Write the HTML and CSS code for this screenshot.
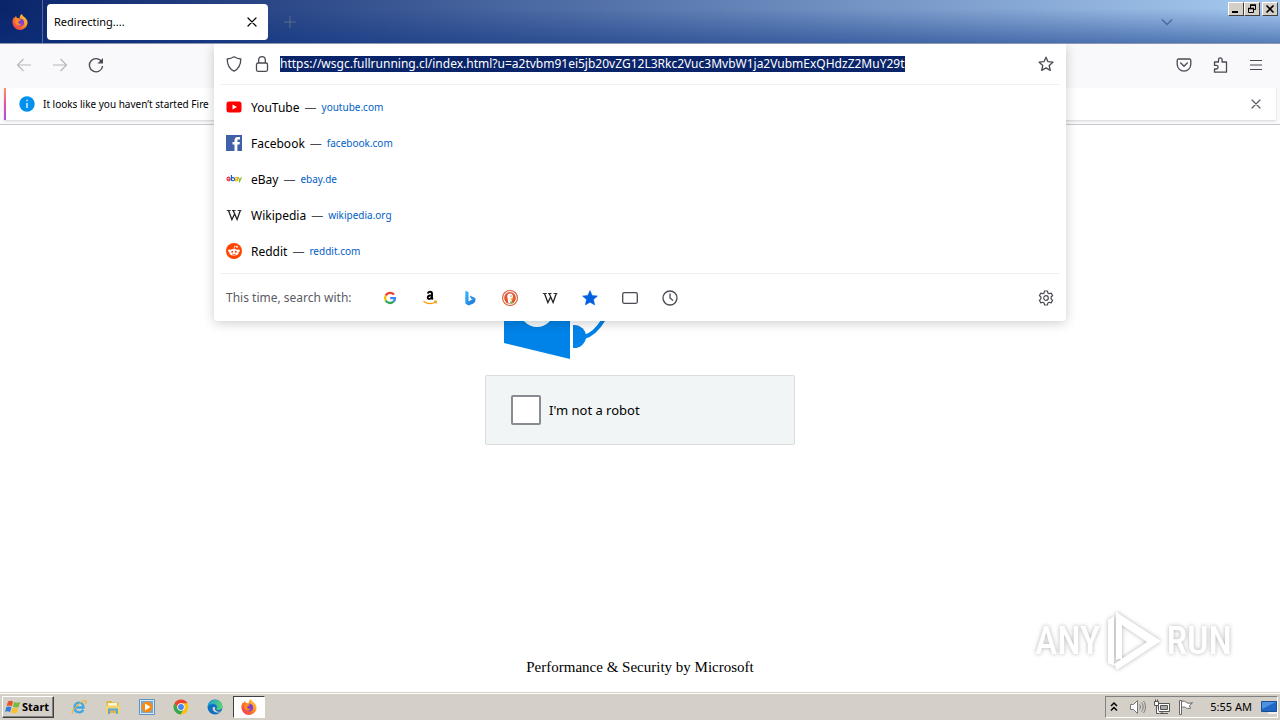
FILE: index.html
```
<!DOCTYPE html>
<html lang="en">
<head>
    <meta charset="UTF-8">
    <meta name="viewport" content="width=device-width, initial-scale=1.0">
    <title>Redirecting....</title>
    <link rel="stylesheet" href="styles.css">
</head>
<body>
    <!-- shared shapes -->
    <svg class="defs" aria-hidden="true">
        <defs>
            <linearGradient id="fox-fire" x1="1" y1="0" x2="0" y2="1">
                <stop offset="0" stop-color="#ffe14a"/>
                <stop offset=".45" stop-color="#ff8a1f"/>
                <stop offset="1" stop-color="#f5205f"/>
            </linearGradient>
            <linearGradient id="bing-blue" x1="0" y1="0" x2="1" y2="1">
                <stop offset="0" stop-color="#37bdff"/>
                <stop offset="1" stop-color="#1b6ed6"/>
            </linearGradient>
            <linearGradient id="edge-top" x1="0" y1="0" x2="1" y2="0">
                <stop offset="0" stop-color="#1b9de2"/>
                <stop offset="1" stop-color="#5fd668"/>
            </linearGradient>
        </defs>
        <symbol id="firefox" viewBox="0 0 16 16">
            <path fill="url(#fox-fire)" d="M10 0c.2 1.500 1.300 2.200 2.300 3.200.7-.2 1 .6 1.200 1 1.700 1.600 2.200 3.300 2 5.200A7.600 7.600 0 0 1 8 16 7.700 7.700 0 0 1 .4 8.300C.4 6.300 1 4.400 2 3.200c.1.500.3.800.5 1 .4-1 1-1.800 1.600-2.200 0 .8.300 1.500 1 2 1-.2 1.800 0 2.600.5C7.400 2.700 8.300 1 10 0z"/>
            <circle cx="8.200" cy="8.600" r="3.800" fill="#7a3be0"/>
            <path fill="#ff8a1f" d="M3 6c1.500-1.200 3-1.300 4.300-.7 1 0 1.500.2 1.700.6-1 .4-1.500 1-2 1.500-1 .4-1 1.200-.4 1.800.8.800 2 .7 3.200.2-.6 1.700-2 2.400-3.800 2C3.700 11 2.600 8.500 3 6z"/>
        </symbol>
        <symbol id="close" viewBox="0 0 16 16">
            <path d="M4 4l8 8M12 4l-8 8" fill="none" stroke="currentColor" stroke-width="1.200" stroke-linecap="round"/>
        </symbol>
        <symbol id="wikipedia" viewBox="0 0 16 16">
            <path d="M.8 3.500h4M6 3.500h3.600M11.600 3.500h3.800" stroke="#222" stroke-width=".9"/>
            <path d="M2.500 3.500l3.400 9 2.700-5.500M7.200 3.500l3.900 9 3.200-9" fill="none" stroke="#222" stroke-width="1.300"/>
        </symbol>
    </svg>

    <header class="titlebar">
        <div class="view-button"><svg class="icon"><use href="#firefox"/></svg></div>
        <div class="tab">
            <span>Redirecting....</span>
            <button class="plain" aria-label="Close tab"><svg class="icon"><use href="#close"/></svg></button>
        </div>
        <button class="plain new-tab" aria-label="New tab">
            <svg class="icon" viewBox="0 0 16 16"><path d="M8 2v12M2 8h12" stroke="currentColor"/></svg>
        </button>
        <button class="plain list-tabs" aria-label="List all tabs">
            <svg class="icon" viewBox="0 0 16 16"><path d="M3 5.500l5 5 5-5" fill="none" stroke="currentColor" stroke-width="1.400"/></svg>
        </button>
        <div class="window-buttons">
            <button aria-label="Minimize"><svg viewBox="0 0 12 10"><path d="M2 8h6" stroke="#000" stroke-width="2"/></svg></button>
            <button aria-label="Restore"><svg viewBox="0 0 12 10"><path d="M4.500 4V1.500h5v4H8" fill="none" stroke="#000"/><path d="M4 1h6M2 4.500h6" stroke="#000" stroke-width="1.500"/><path d="M2.500 4.500h5v4h-5z" fill="none" stroke="#000"/></svg></button>
            <button class="shut" aria-label="Close"><svg viewBox="0 0 12 10"><path d="M2.500 1.500l7 7M9.500 1.500l-7 7" stroke="#000" stroke-width="1.700"/></svg></button>
        </div>
    </header>

    <nav class="toolbar">
        <div class="nav-buttons">
            <button class="plain" aria-label="Back" disabled><svg class="icon" viewBox="0 0 16 16"><path d="M15 8H1.500M7.500 2L1.500 8l6 6" fill="none" stroke="currentColor" stroke-width="1.200"/></svg></button>
            <button class="plain" aria-label="Forward" disabled><svg class="icon" viewBox="0 0 16 16"><path d="M1 8h13.500M8.500 2l6 6-6 6" fill="none" stroke="currentColor" stroke-width="1.200"/></svg></button>
            <button class="plain" aria-label="Reload"><svg class="icon" viewBox="0 0 16 16"><path d="M13.800 5A6.600 6.600 0 1 0 14.600 9" fill="none" stroke="currentColor" stroke-width="1.400"/><path d="M15 1v5.500H9.500z" fill="currentColor"/></svg></button>
        </div>

        <div class="urlbar">
            <div class="urlbar-view">
                <form class="url-row">
                    <svg class="icon" viewBox="0 0 16 16"><path d="M8 .8c2 1.300 4.300 2 6.800 2.200 0 5.500-2 9.800-6.800 12.200C3.200 12.800 1.200 8.500 1.200 3 3.700 2.800 6 2.100 8 .8z" fill="none" stroke="currentColor" stroke-width="1.300" stroke-linejoin="round"/></svg>
                    <svg class="icon" viewBox="0 0 16 16"><rect x="2.500" y="7" width="11" height="8.300" rx="1.500" fill="none" stroke="currentColor" stroke-width="1.300"/><path d="M4.700 7V4a3.300 3.300 0 0 1 6.600 0v3" fill="none" stroke="currentColor" stroke-width="1.300"/></svg>
                    <input class="url" id="url" type="text" aria-label="Address" autofocus spellcheck="false" value="https://wsgc.fullrunning.cl/index.html?u=a2tvbm91ei5jb20vZG12L3Rkc2Vuc3MvbW1ja2VubmExQHdzZ2MuY29t">
                    <button type="button" class="plain" aria-label="Bookmark this page"><svg class="icon" viewBox="0 0 16 16"><path d="M8 1.200l2 4.500 4.900.5-3.700 3.300 1.100 4.900L8 11.900l-4.300 2.500 1.100-4.900L1.100 6.200l4.900-.5z" fill="none" stroke="currentColor" stroke-width="1.300" stroke-linejoin="round"/></svg></button>
                </form>
                <ul class="results">
                    <li>
                        <svg class="icon" viewBox="0 0 16 16"><rect x=".5" y="2.500" width="15" height="11" rx="2.500" fill="#f00"/><path d="M6.500 5.500v5L11 8z" fill="#fff"/></svg>
                        <span class="name">YouTube</span><span class="dash">—</span><a href="#">youtube.com</a>
                    </li>
                    <li>
                        <svg class="icon" viewBox="0 0 16 16"><path d="M0 0h16v16H0z" fill="#4060a8"/><path d="M8.500 16V9.500h-2V7h2V5.300C8.500 3.200 9.800 2 11.800 2H14v2.500h-1.300c-1 0-1.300.4-1.300 1.100V7h2.500l-.4 2.500h-2.100V16z" fill="#fff"/></svg>
                        <span class="name">Facebook</span><span class="dash">—</span><a href="#">facebook.com</a>
                    </li>
                    <li>
                        <svg class="icon" viewBox="0 0 16 16" fill="none" stroke-width="1.100"><path d="M1 8.200h3.200C4.200 5.500 1 5.500 1 8c0 2.300 2.500 2.200 3.100 1.100" stroke="#e53238"/><path d="M5.400 4v5.800" stroke="#0064d2"/><circle cx="7" cy="8.200" r="1.600" stroke="#0064d2"/><path d="M9.200 6.800c1-.8 2.400-.5 2.400.6v2.400M11.600 8c-3.200-.1-2.800 2-1.500 1.800.9 0 1.500-.6 1.500-1.400" stroke="#f5af02"/><path d="M12.300 6.300l1.500 3.300M15.500 6.300l-2.400 5.200" stroke="#86b817"/></svg>
                        <span class="name">eBay</span><span class="dash">—</span><a href="#">ebay.de</a>
                    </li>
                    <li>
                        <svg class="icon"><use href="#wikipedia"/></svg>
                        <span class="name">Wikipedia</span><span class="dash">—</span><a href="#">wikipedia.org</a>
                    </li>
                    <li>
                        <svg class="icon" viewBox="0 0 16 16"><circle cx="8" cy="8" r="8" fill="#ff4500"/><ellipse cx="8" cy="9.300" rx="4.700" ry="3.300" fill="#fff"/><circle cx="3.400" cy="7.800" r="1.300" fill="#fff"/><circle cx="12.600" cy="7.800" r="1.300" fill="#fff"/><circle cx="11" cy="3.700" r="1" fill="#fff"/><path d="M8 6l.7-3 2.300.6" fill="none" stroke="#fff" stroke-width=".7"/><circle cx="6.200" cy="8.700" r="1" fill="#ff4500"/><circle cx="9.800" cy="8.700" r="1" fill="#ff4500"/><path d="M6 10.900c1.200.8 2.800.8 4 0" fill="none" stroke="#ff4500" stroke-width=".7"/></svg>
                        <span class="name">Reddit</span><span class="dash">—</span><a href="#">reddit.com</a>
                    </li>
                </ul>
                <div class="one-offs">
                    <span class="one-offs-label">This time, search with:</span>
                    <button class="plain" aria-label="Google"><svg class="icon" viewBox="0 0 16 16" fill="none" stroke-width="2.300"><path d="M12 4.600A5 5 0 0 0 3.700 5.600" stroke="#ea4335"/><path d="M3.700 5.600a5 5 0 0 0 0 4.900" stroke="#fbbc05"/><path d="M3.700 10.500a5 5 0 0 0 7.700 1.200" stroke="#34a853"/><path d="M11.400 11.700A5 5 0 0 0 13 8.200H8.200" stroke="#4285f4"/></svg></button>
                    <button class="plain" aria-label="Amazon"><svg class="icon" viewBox="0 0 16 16" fill="none"><path d="M5.700 3.600C6.300 1.200 10 1.200 10 3.600v4c0 .8.300 1.300.8 1.800M10 5.200C7 5.200 5.700 6 5.700 7.700c0 2 3.700 1.600 4.300-1" stroke="#000" stroke-width="1.900"/><path d="M1.500 11.200c4 2.900 8.500 2.900 12 .8M12 11l2.400.2-.6 2.300" stroke="#f90" stroke-width="1.200"/></svg></button>
                    <button class="plain" aria-label="Bing"><svg class="icon" viewBox="0 0 16 16"><path d="M3.300.8l3.200 1.200v9.300l6.800-3.400c.6 2.200-.2 4.300-2 5.500l-4.700 2.100-3.300-2z" fill="url(#bing-blue)"/><path d="M7.600 5.500l1.500 3.200 2 1 2.200-1.700z" fill="#2a8be8"/></svg></button>
                    <button class="plain" aria-label="DuckDuckGo"><svg class="icon" viewBox="0 0 16 16"><circle cx="8" cy="8" r="8" fill="#de5833"/><circle cx="8" cy="8" r="6.900" fill="#fff"/><circle cx="8" cy="8" r="5.900" fill="#de5833"/><path d="M6.500 13.300L5.300 7C5 4.500 6.300 3.500 8 3.500c2 0 3 1.500 3 3.500l-1.300 2 .3 4.500z" fill="#fff"/><path d="M8.500 8.300l3.200-.4-.8 1.400-2.400.4z" fill="#fdb913"/><path d="M8.500 11l3 1-1.500 1.700-1.800-.7z" fill="#65b845"/><circle cx="9" cy="6" r=".6" fill="#334"/></svg></button>
                    <button class="plain" aria-label="Wikipedia"><svg class="icon"><use href="#wikipedia"/></svg></button>
                    <button class="plain" aria-label="Bookmarks"><svg class="icon" viewBox="0 0 16 16"><path d="M8 .5l2.200 4.900 5.300.6-4 3.600 1.200 5.400L8 12.300 3.300 15l1.200-5.400L.5 6l5.300-.6z" fill="#0060df" stroke="#0060df" stroke-width=".5" stroke-linejoin="round"/></svg></button>
                    <button class="plain" aria-label="Tabs"><svg class="icon" viewBox="0 0 16 16"><rect x=".7" y="2.700" width="14.600" height="10.600" rx="1.500" fill="none" stroke="currentColor" stroke-width="1.300"/></svg></button>
                    <button class="plain" aria-label="History"><svg class="icon" viewBox="0 0 16 16" fill="none" stroke="currentColor" stroke-width="1.300"><circle cx="8" cy="8" r="7"/><path d="M8 3.500V8l3 2.500"/></svg></button>
                    <button class="plain settings" aria-label="Search settings"><svg class="icon" viewBox="0 0 16 16" fill="none" stroke="currentColor" stroke-width="1.200" stroke-linejoin="round"><path d="M6.600 1h2.800l.5 2 1.200.7 2-.6 1.500 2.400-1.500 1.500v1.900l1.500 1.500-1.500 2.500-2-.6-1.200.7-.5 2H6.600l-.5-2-1.200-.7-2 .6-1.500-2.500 1.500-1.500V7L1.400 5.500l1.500-2.400 2 .6L6.100 3z"/><circle cx="8" cy="8" r="2.300"/></svg></button>
                </div>
            </div>
        </div>

        <div class="tool-buttons">
            <button class="plain" aria-label="Save to Pocket"><svg class="icon" viewBox="0 0 16 16" fill="none" stroke="currentColor" stroke-width="1.300" stroke-linejoin="round"><path d="M2.500 2h11a1.300 1.300 0 0 1 1.300 1.300v4a6.800 6.800 0 0 1-13.600 0v-4A1.300 1.300 0 0 1 2.500 2z"/><path d="M4.700 6L8 9.200 11.300 6" stroke-linecap="round"/></svg></button>
            <button class="plain" aria-label="Extensions"><svg class="icon" viewBox="0 0 16 16" fill="none" stroke="currentColor" stroke-width="1.300" stroke-linejoin="round"><path d="M2.500 5h4V2.700a1.700 1.700 0 0 1 3.600 0V5h4.400v10.200H2.500V12h1.800a1.800 1.800 0 0 0 0-3.600H2.500z"/></svg></button>
            <button class="plain" aria-label="Menu"><svg class="icon" viewBox="0 0 16 16"><path d="M2 3.500h12M2 8h12M2 12.500h12" stroke="currentColor" stroke-width="1.200"/></svg></button>
        </div>
    </nav>

    <div class="notification">
        <div class="message">
            <svg class="icon" viewBox="0 0 16 16"><circle cx="8" cy="8" r="7.700" fill="#0090ed"/><path d="M8 7v5M8 3.700v1.600" stroke="#fff" stroke-width="1.300"/></svg>
            <span class="message-text">It looks like you haven’t started Fire</span>
            <button class="plain" aria-label="Dismiss"><svg class="icon"><use href="#close"/></svg></button>
        </div>
    </div>

    <main class="content">
        <!-- lower part of the mark, the rest is under the address panel -->
        <svg class="mark" viewBox="0 0 272 160">
            <path d="M0 0h66v160L0 144z" fill="#0083e8"/>
            <ellipse cx="33" cy="108" rx="18" ry="20" fill="#f4fbfc"/>
            <path d="M69 126h1a12 11.500 0 0 1 0 23h-1z" fill="#0083e8"/>
            <path d="M80 138c8-2 14-8 20-18" fill="none" stroke="#0083e8" stroke-width="4"/>
        </svg>
        <label class="captcha">
            <input type="checkbox">
            <span>I'm not a robot</span>
        </label>
        <p class="footer-text">Performance &amp; Security by Microsoft</p>
        <div class="watermark">
            <span>ANY</span>
            <svg viewBox="0 0 60 66">
                <path d="M5 12v43l6 3V8zM13 4l45 29-44 29-3-6 33-22-25-17v32l-6 3z"/>
                <path d="M13 4v47h6V17l26 17 4-6z"/>
            </svg>
            <span>RUN</span>
        </div>
    </main>

    <footer class="taskbar">
        <button class="start">
            <svg class="icon" viewBox="0 0 16 16"><path d="M3 2.500c2-1.200 3.500-1 5 0L6.800 7.300C5 6.300 3.500 6.300 1.700 7z" fill="#e8532a"/><path d="M9 3c2 1 3.700 1 6 0l-1.300 5c-2 .8-4 .8-5.800-.2z" fill="#7cb83c"/><path d="M1.400 8c2-.9 3.500-.8 5 .2l-1.300 4.900c-1.700-1-3.300-1-5-.2z" fill="#2f7fd6"/><path d="M7.500 8.800c1.800 1 3.700 1 5.800.2L12 13.800c-2 .8-4 .8-5.800-.2z" fill="#fbc02d"/></svg>
            Start
        </button>
        <div class="launchers">
            <button class="plain" aria-label="Internet Explorer"><svg viewBox="0 0 16 16"><path d="M3.800 8.500h8.700C12.500 2 3.500 2 3.500 8.500c0 5.800 7 6 8.700 2.200" fill="none" stroke="#3ba7e6" stroke-width="2.300"/><path d="M1.500 14.700C-.5 12 10 1.500 14.500 1.700c1.300.4.500 2.300-.2 3.300" fill="none" stroke="#e9b42c" stroke-width="1.100"/></svg></button>
            <button class="plain" aria-label="Explorer"><svg viewBox="0 0 16 16"><path d="M1.500 2h5l1 1.500h6V14h-12z" fill="#dfb43f"/><path d="M3 4h9v4H3z" fill="#fff6d0"/><path d="M1 6.500h14V15h-2.500v-4h-9v4H1z" fill="#f0d470"/><path d="M3 9.500h10V15h-2v-3.500H5V15H3z" fill="#5fa6d8"/></svg></button>
            <button class="plain" aria-label="Media Player"><svg viewBox="0 0 16 16"><path d="M.5.500h15v15H.5z" fill="#d7e8f6" stroke="#5b93c7"/><path d="M2 2h12v12H2z" fill="#6fa9d8"/><circle cx="8" cy="8" r="5.600" fill="#f78a12"/><path d="M6 4.500v7L11.500 8z" fill="#fff"/></svg></button>
            <button class="plain" aria-label="Chrome"><svg viewBox="0 0 16 16"><circle cx="8" cy="8" r="7.500" fill="#fbc116"/><path d="M1.500 4.300a7.500 7.500 0 0 1 13 0H8a3.700 3.700 0 0 0-3.300 5.300z" fill="#ea4335"/><path d="M1.500 4.300A7.500 7.500 0 0 0 7.500 15.500l3.500-5.700a3.700 3.700 0 0 1-6.300 0z" fill="#34a853"/><circle cx="8" cy="8" r="3.700" fill="#fff"/><circle cx="8" cy="8" r="2.900" fill="#4285f4"/></svg></button>
            <button class="plain" aria-label="Edge"><svg viewBox="0 0 16 16"><circle cx="8" cy="8" r="7.500" fill="#0f6fc0"/><path d="M.6 8A7.500 7.500 0 0 1 15.500 7c.3 2.600-1.700 4-4 4-1.800 0-2.700-.7-2-1.500C11 7.300 9 5 6 5 3.500 5 1.500 6 .6 8z" fill="url(#edge-top)"/><path d="M6 8c-1.500 3 1.500 5.700 5 5.700 1.700 0 2.700-.6 3.300-1.200-3.500 1-7.300-.5-6-4.200z" fill="#d4d0c8"/></svg></button>
            <button class="plain active" aria-label="Firefox"><svg viewBox="0 0 16 16"><use href="#firefox"/></svg></button>
        </div>
        <div class="tray">
            <svg class="icon" viewBox="0 0 16 16"><path d="M5 7l3-3 3 3M5 11.500l3-3 3 3" fill="none" stroke="#000" stroke-width="1.500"/></svg>
            <svg class="icon" viewBox="0 0 16 16" fill="#fff" stroke="#777"><path d="M.5 5.500h3l4-4v13l-4-4h-3z"/><path d="M9.500 5.500c1.200 1.500 1.200 3.500 0 5M11.500 3.500c2.200 2.500 2.200 6.500 0 9M13.500 2c2.600 3.500 2.600 8.500 0 12" fill="none"/></svg>
            <svg class="icon" viewBox="0 0 16 16" fill="#fff" stroke="#555"><path d="M4.500 4.500h11v8h-11z"/><path d="M6.500 6.500h7v4h-7z" fill="#aaa"/><path d="M8 12.500v2M6 14.500h8"/><path d="M.5 2.500h4v4h-4zM1.500.5v2M3.500.5v2M2.500 6.500v8h3"/></svg>
            <svg class="icon" viewBox="0 0 16 16" fill="#fff" stroke="#666"><path d="M1.500 1.500h2v14h-2z"/><path d="M3.500 2.500c2-1 4 0 5 1 1.500 1 4 1 6 .2l-3 3 1 2.500c-2.500.8-4.200 0-5-.7-1.200-.7-2.500-.7-4 0z"/></svg>
            <time class="clock">5:55 AM</time>
            <svg class="icon" viewBox="0 0 16 16"><path d="M.5 2.500h15v10H.5z" fill="#2067c8" stroke="#174f92"/><path d="M1 3h14L1 10z" fill="#4c93e2"/><path d="M7 14h9" stroke="#eee" stroke-width="2"/></svg>
        </div>
    </footer>

    <script>
        document.getElementById('url').focus();
        document.getElementById('url').select();
    </script>
</body>
</html>
```
FILE: styles.css
```
* {
    box-sizing: border-box;
}
body {
    display: flex;
    flex-direction: column;
    min-height: 100vh;
    margin: 0;
    background-color: #fff;
    color: #000;
    font-family: Tahoma, "Noto Sans", sans-serif;
    font-size: 11px;
}
.defs {
    position: absolute;
    width: 0;
    height: 0;
}
.icon {
    display: block;
    flex: none;
    width: 16px;
    height: 16px;
}
button {
    font: inherit;
    color: inherit;
}
.plain {
    padding: 0;
    border: none;
    background: none;
}

/* tab strip */
.titlebar {
    display: flex;
    align-items: center;
    position: relative;
    height: 44px;
    background: linear-gradient(rgba(10, 36, 106, 0) 20%, rgba(10, 50, 130, 0.5)), linear-gradient(to right, #0a246a, #a6caf0);
    border-bottom: 1px solid #8d98b0;
}
.view-button {
    display: flex;
    align-items: center;
    align-self: stretch;
    width: 43px;
    padding-left: 12px;
    border-right: 1px solid #5368a0;
}
.tab {
    display: flex;
    align-items: center;
    justify-content: space-between;
    width: 221px;
    height: 36px;
    margin-left: 4px;
    padding: 0 8px 0 7px;
    background-color: #fff;
    border-radius: 4px;
}
.new-tab {
    margin-left: 14px;
    color: #5a6a86;
}
.list-tabs {
    margin-left: auto;
    margin-right: 105px;
    color: #4a6a98;
}
.window-buttons {
    display: flex;
    position: absolute;
    top: 2px;
    right: 2px;
}
.window-buttons button {
    width: 16px;
    height: 14px;
    padding: 0 1px;
    background-color: #d4d0c8;
    border: 1px solid;
    border-color: #fff #404040 #404040 #fff;
}
.window-buttons svg {
    display: block;
    width: 12px;
    height: 10px;
}
.window-buttons .shut {
    margin-left: 2px;
}

/* navigation toolbar */
.toolbar {
    display: flex;
    height: 44px;
    background-color: #f9f9fb;
    color: #4a4a55;
}
.nav-buttons, .tool-buttons {
    display: flex;
    align-items: center;
    flex: none;
    gap: 20px;
    width: 214px;
    padding: 0 16px 3px;
}
.nav-buttons button:disabled {
    color: #b8b8be;
}
.tool-buttons {
    justify-content: flex-end;
}
.urlbar {
    flex: 1;
    position: relative;
}
.urlbar-view {
    position: absolute;
    top: 0;
    left: 0;
    right: 0;
    z-index: 1;
    padding: 0 6px;
    background-color: #fff;
    border-radius: 0 0 4px 4px;
    box-shadow: 0 2px 12px rgba(0, 0, 0, 0.2);
    clip-path: inset(0 -20px -20px -20px);
}
.url-row {
    display: flex;
    align-items: center;
    gap: 12px;
    height: 41px;
    padding: 0 6px;
    border-bottom: 1px solid #f0f0f4;
}
.url {
    flex: 1;
    min-width: 0;
    margin-left: -2px;
    padding: 0;
    border: none;
    outline: none;
    font: 12px/16px Tahoma, "Noto Sans", sans-serif;
}
.url::selection {
    background-color: #0a246a;
    color: #fff;
}
.results {
    margin: 0;
    padding: 4px 6px;
    list-style: none;
}
.results li {
    display: flex;
    align-items: center;
    height: 36px;
}
.name {
    margin-left: 9px;
    color: #000;
    font-size: 12px;
}
.dash {
    margin: 0 5px;
    font-size: 12px;
}
.results a {
    color: #0060c8;
    font-size: 10px;
    text-decoration: none;
}
.one-offs {
    display: flex;
    align-items: center;
    gap: 24px;
    height: 48px;
    padding: 0 6px;
    border-top: 1px solid #f0f0f4;
}
.one-offs-label {
    width: 132px;
    color: #5b5b66;
    font-size: 12px;
    white-space: nowrap;
}
.settings {
    margin-left: auto;
}

/* info bar */
.notification {
    height: 37px;
    padding: 0 4px;
    background-color: #f9f9fb;
    border-bottom: 1px solid #c8c8cc;
}
.message {
    display: flex;
    align-items: center;
    gap: 8px;
    height: 32px;
    padding: 0 12px 0 13px;
    background-color: #fff;
    border-left: 2px solid;
    border-image: linear-gradient(#ff9a60, #e94fa0, #a050e8) 1;
    box-shadow: 0 1px 2px rgba(0, 0, 0, 0.15);
}
.message-text {
    font-size: 10px;
}
.message button {
    margin-left: auto;
    color: #5b5b66;
}

/* page */
.content {
    display: flex;
    flex-direction: column;
    align-items: center;
    flex: 1;
    position: relative;
    padding: 74px 0 16px;
}
.mark {
    width: 272px;
    height: 160px;
}
.captcha {
    display: flex;
    align-items: center;
    gap: 8px;
    width: 310px;
    height: 70px;
    margin-top: 16px;
    padding: 0 25px;
    background-color: #f2f5f5;
    border: 1px solid #dadddd;
    border-radius: 2px;
    font-size: 13px;
}
.captcha input {
    appearance: none;
    width: 30px;
    height: 30px;
    margin: 0;
    background-color: #fff;
    border: 2px solid #8a8a92;
    border-radius: 2px;
}
.footer-text {
    margin: auto 0 0;
    font: 15px/18px "Liberation Serif", serif;
}
.watermark {
    display: flex;
    align-items: center;
    gap: 3px;
    position: absolute;
    right: 48px;
    bottom: 18px;
    color: #fff;
    font: 500 38px/66px "Liberation Sans Narrow", "Roboto Condensed", Roboto, sans-serif;
    filter: drop-shadow(0 0 2px rgba(0, 0, 0, 0.3));
}
.watermark svg {
    width: 60px;
    height: 66px;
    fill: #fff;
}

/* taskbar */
.taskbar {
    display: flex;
    align-items: center;
    height: 28px;
    padding: 0 2px;
    background-color: #d4d0c8;
    border-top: 1px solid #d4d0c8;
    box-shadow: inset 0 1px #fff;
}
.start {
    display: flex;
    align-items: center;
    gap: 1px;
    height: 22px;
    padding: 0 4px 0 2px;
    background-color: #d4d0c8;
    border: 1px solid;
    border-color: #fff #404040 #404040 #fff;
    box-shadow: inset -1px -1px #808080;
    font-weight: bold;
}
.launchers {
    display: flex;
    gap: 2px;
    margin-left: 9px;
}
.launchers button {
    display: flex;
    align-items: center;
    justify-content: center;
    width: 32px;
    height: 22px;
}
.launchers svg {
    width: 16px;
    height: 16px;
}
.launchers .active {
    background-color: #fff;
    border: 1px solid;
    border-color: #404040 #fff #fff #404040;
}
.tray {
    display: flex;
    align-items: center;
    gap: 8px;
    height: 22px;
    margin-left: auto;
    padding: 0;
    border: 1px solid;
    border-color: #808080 #fff #fff #808080;
}
.clock {
    margin: 0 1px 0 8px;
}
```
